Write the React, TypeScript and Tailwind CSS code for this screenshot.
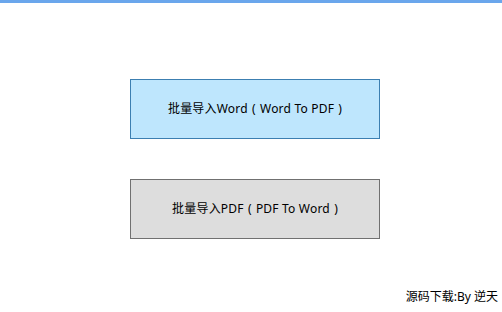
const App = () => {
  return (
    <div className="w-[502px] h-[312px] bg-white flex flex-col font-['Segoe_UI','Noto_Sans','Noto_Sans_CJK_SC',sans-serif] text-[12px] text-black">
      <div className="h-[3px] bg-[#6aa6ec]" />
      <div className="flex flex-col items-start pl-[130px] pt-[76px] gap-[40px]">
        <button className="w-[250px] h-[60px] border border-[#3c7fb1] bg-[#bee6fd] flex items-center justify-center tracking-[0.2px]">
          {"批量导入Word\u2004(\u2004Word To PDF\u2004)"}
        </button>
        <button className="w-[250px] h-[60px] border border-[#707070] bg-[#dddddd] flex items-center justify-center tracking-[0.2px]">
          {"批量导入PDF\u2004(\u2004PDF To Word\u2004)"}
        </button>
      </div>
      <div className="mt-auto mb-[6px] pr-[4px] text-right">源码下载:By 逆天</div>
    </div>
  )
}

export default App
